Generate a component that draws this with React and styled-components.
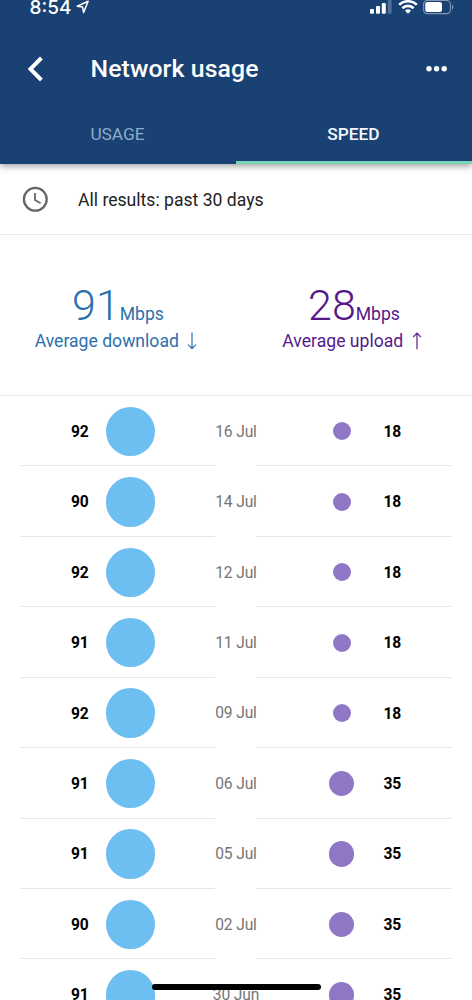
import React from 'react';
import styled, { createGlobalStyle } from 'styled-components';

const results = [
  { date: '16 Jul', download: 92, upload: 18 },
  { date: '14 Jul', download: 90, upload: 18 },
  { date: '12 Jul', download: 92, upload: 18 },
  { date: '11 Jul', download: 91, upload: 18 },
  { date: '09 Jul', download: 92, upload: 18 },
  { date: '06 Jul', download: 91, upload: 35 },
  { date: '05 Jul', download: 91, upload: 35 },
  { date: '02 Jul', download: 90, upload: 35 },
  { date: '30 Jun', download: 91, upload: 35 },
];

const LocationIcon = () => (
  <svg width="14" height="14" viewBox="0 0 14 14" fill="none">
    <path d="M12.1 1.3L1.2 6.3L6.6 7.1L7.6 12.5Z" stroke="#fff" strokeWidth="1.5" strokeLinejoin="round" />
  </svg>
);

const SignalIcon = () => (
  <svg width="22" height="14" viewBox="0 0 22 14" fill="#fff">
    <rect x="0" y="9" width="4" height="4.7" rx="1" />
    <rect x="6" y="6" width="4" height="7.7" rx="1" />
    <rect x="11.8" y="3" width="4" height="10.7" rx="1" />
    <rect x="17.8" y="0" width="3.8" height="13.7" rx="1" opacity="0.25" />
  </svg>
);

const WifiIcon = () => (
  <svg width="20" height="14" viewBox="0 0 20 14" fill="none" stroke="#fff" strokeWidth="2.6">
    <path d="M1.2 4.8A12.6 12.6 0 0 1 18.8 4.8" />
    <path d="M4.4 8.2A8 8 0 0 1 15.6 8.2" />
    <path d="M10 13.8L7 10.8A4.3 4.3 0 0 1 13 10.8Z" fill="#fff" stroke="none" />
  </svg>
);

const BatteryIcon = () => (
  <svg width="31" height="15" viewBox="0 0 31 15">
    <rect x="0.6" y="0.4" width="26.8" height="13.2" rx="3.8" fill="none" stroke="#fff" strokeOpacity="0.45" strokeWidth="1.1" />
    <rect x="2.2" y="2.1" width="16.8" height="9.8" rx="2.2" fill="#fff" />
    <path d="M29 4.8C30.8 5.6 30.8 8.8 29 9.6Z" fill="#fff" fillOpacity="0.5" />
  </svg>
);

const BackIcon = () => (
  <svg width="17" height="26" viewBox="0 0 17 26" fill="none">
    <path d="M14.4 2L3.4 13L14.4 24" stroke="#fff" strokeWidth="3.9" />
  </svg>
);

const MoreIcon = () => (
  <svg width="22" height="6" viewBox="0 0 22 6" fill="#fff">
    <circle cx="3" cy="2.8" r="2.7" />
    <circle cx="10.6" cy="2.8" r="2.7" />
    <circle cx="18.2" cy="2.8" r="2.7" />
  </svg>
);

const ClockIcon = () => (
  <svg width="26" height="26" viewBox="0 0 26 26" fill="none" stroke="#666">
    <circle cx="13.3" cy="13.3" r="11.4" strokeWidth="2.3" />
    <path d="M13 6.9V13.9L18.6 17.3" strokeWidth="1.8" />
  </svg>
);

const ArrowIcon = ({ up }) => (
  <svg width="10" height="18" viewBox="0 0 10 18" fill="none" stroke="currentColor" strokeWidth="1.2">
    <path d={up ? 'M5 17.3V1.2M1.1 5.1L5 1.2L8.9 5.1' : 'M5 0.5V16.4M1.1 12.7L5 16.6L8.9 12.7'} />
  </svg>
);

const App = () => (
  <>
    <GlobalStyle />
    <Screen>
      <Header>
        <StatusBar>
          <Time>8:54</Time>
          <LocationIcon />
          <StatusIcons>
            <SignalIcon />
            <WifiIcon />
            <BatteryIcon />
          </StatusIcons>
        </StatusBar>
        <TitleBar>
          <BackIcon />
          <Title>Network usage</Title>
          <MoreIcon />
        </TitleBar>
        <Tabs>
          <Tab>USAGE</Tab>
          <Tab $active>SPEED</Tab>
        </Tabs>
      </Header>
      <Filter>
        <ClockIcon />
        <FilterText>All results: past 30 days</FilterText>
      </Filter>
      <Summary>
        <Average $color="#2c6fae">
          <Speed>
            <Value>91</Value>
            <Unit>Mbps</Unit>
          </Speed>
          <Label>
            <LabelText>Average download</LabelText>
            <ArrowIcon />
          </Label>
        </Average>
        <Average $color="#56198c">
          <Speed>
            <Value>28</Value>
            <Unit>Mbps</Unit>
          </Speed>
          <Label>
            <LabelText>Average upload</LabelText>
            <ArrowIcon up />
          </Label>
        </Average>
      </Summary>
      <Results>
        {results.map((r) => (
          <Row key={r.date}>
            <Download>
              <Amount>{r.download}</Amount>
              <Dot $size={49.4} $color="#6dbef1" />
            </Download>
            <DateText>{r.date}</DateText>
            <Upload>
              <DotSlot>
                <Dot $size={r.upload > 30 ? 25.4 : 18} $color="#8f77c6" />
              </DotSlot>
              <Amount>{r.upload}</Amount>
            </Upload>
          </Row>
        ))}
      </Results>
      <HomeIndicator />
    </Screen>
  </>
);

// Styled components
const GlobalStyle = createGlobalStyle`
  * {
    box-sizing: border-box;
  }
  body {
    margin: 0;
    background: #fff;
    font-family: Roboto, sans-serif;
  }
  svg {
    display: block;
    flex-shrink: 0;
  }
`;

const Screen = styled.div`
  height: 1000px;
  overflow: hidden;
  position: relative;
  width: 472px;
`;

const Header = styled.header`
  background: #1a4173;
  box-shadow: 0 2px 7px rgba(0, 0, 0, 0.4);
  height: 164px;
  position: relative;
`;

const StatusBar = styled.div`
  align-items: flex-start;
  display: flex;
  height: 34px;
  padding: 0 18px 0 29.5px;
`;

const Time = styled.span`
  color: #fff;
  font-family: Inter, sans-serif;
  font-size: 19px;
  font-weight: 500;
  line-height: 15px;
  width: 46.5px;
`;

const StatusIcons = styled.div`
  align-items: flex-start;
  display: flex;
  gap: 5.5px;
  margin-left: auto;
`;

const TitleBar = styled.div`
  align-items: center;
  display: flex;
  height: 70px;
  padding: 0 24px 0 27px;
`;

const Title = styled.h1`
  color: #fff;
  flex: 1;
  font-size: 24.8px;
  font-weight: 500;
  letter-spacing: 0.1px;
  line-height: 30px;
  margin: 0 0 0 46.5px;
`;

const Tabs = styled.nav`
  display: grid;
  grid-template-columns: 1fr 1fr;
  height: 60px;
`;

const Tab = styled.a`
  align-items: center;
  border-bottom: 3px solid ${(p) => (p.$active ? '#79d5ba' : 'transparent')};
  color: ${(p) => (p.$active ? '#f4f8fc' : '#8fabc9')};
  display: flex;
  font-size: 17.3px;
  font-weight: ${(p) => (p.$active ? 500 : 400)};
  justify-content: center;
  padding: 3px 1px 0 0;
`;

const Filter = styled.div`
  align-items: center;
  border-bottom: 1px solid #e9e9e9;
  display: flex;
  height: 71px;
  padding-left: 22px;
`;

const FilterText = styled.span`
  color: #222;
  font-size: 17.6px;
  margin: 1px 0 0 30px;
`;

const Summary = styled.section`
  border-bottom: 1px solid #e9e9e9;
  display: grid;
  grid-template-columns: 1fr 1fr;
  height: 161px;
`;

const Average = styled.div`
  align-items: center;
  color: ${(p) => p.$color};
  display: flex;
  flex-direction: column;
  padding-top: 45px;
`;

const Speed = styled.div`
  align-items: baseline;
  display: flex;
  height: 50px;
  line-height: 50px;
`;

const Value = styled.span`
  font-size: 43px;
  font-weight: 300;
`;

const Unit = styled.span`
  font-size: 17.6px;
`;

const Label = styled.div`
  align-items: center;
  display: flex;
  gap: 8.5px;
  height: 22px;
  padding-right: 4px;
`;

const LabelText = styled.span`
  font-size: 17.6px;
`;

const Results = styled.div`
  padding: 0 20px;
`;

const Row = styled.div`
  display: grid;
  grid-template-columns: 195px 41px 196px;
  height: 70.43px;
`;

const Side = styled.div`
  align-items: center;
  border-bottom: 1px solid #e6e6e6;
  display: flex;
  padding-top: 1.5px;
`;

const Download = styled(Side)`
  gap: 17px;
  padding-left: 51px;
`;

const Upload = styled(Side)`
  padding-left: 70px;
`;

const DotSlot = styled.div`
  display: flex;
  justify-content: center;
  margin-right: 26.5px;
  width: 31px;
`;

const Amount = styled.span`
  color: #000;
  font-size: 15.6px;
  font-weight: 700;
  letter-spacing: -0.1px;
  padding-top: 1px;
`;

const Dot = styled.div`
  background: ${(p) => p.$color};
  border-radius: 50%;
  height: ${(p) => p.$size}px;
  width: ${(p) => p.$size}px;
`;

const DateText = styled.span`
  align-self: center;
  color: #757575;
  display: flex;
  font-size: 15.6px;
  justify-content: center;
  letter-spacing: -0.15px;
  padding: 1px 0 0 1px;
  white-space: nowrap;
`;

const HomeIndicator = styled.div`
  background: #000;
  border-radius: 4px;
  height: 6px;
  left: 152px;
  position: absolute;
  top: 984px;
  width: 169px;
`;

export default App;
